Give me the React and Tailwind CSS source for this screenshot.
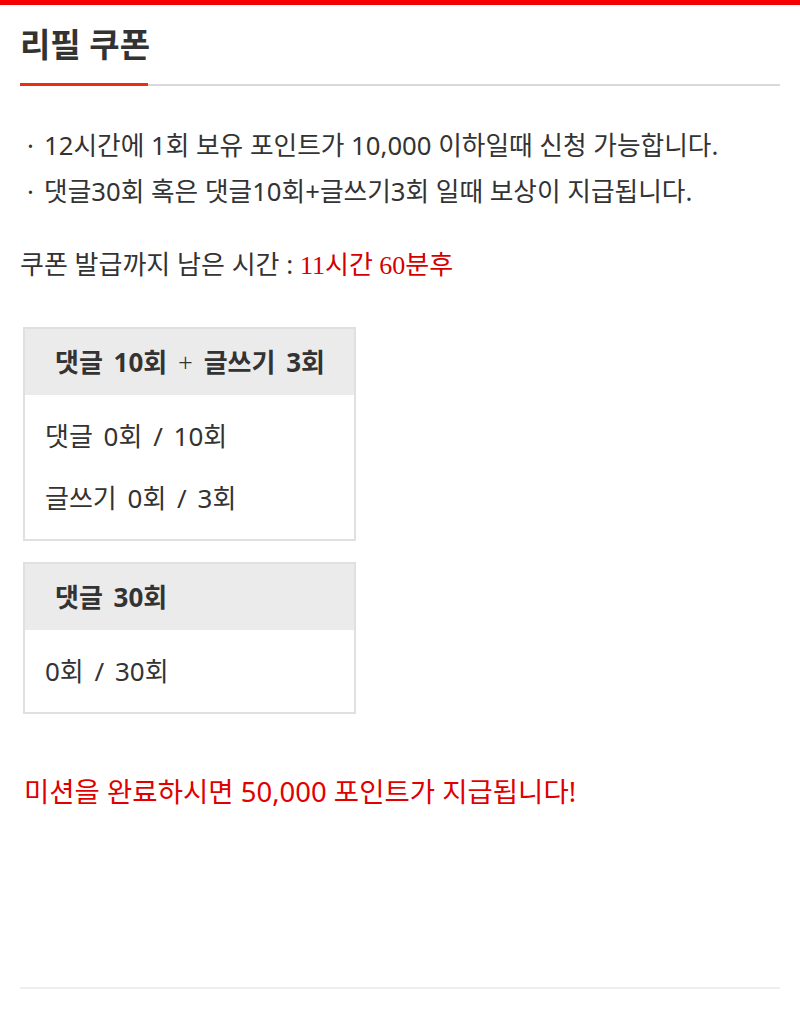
const sans = "font-['Noto_Sans','Noto_Sans_CJK_KR',sans-serif]";

const MissionBox = ({ title, rows }) => (
  <div className="ml-[3px] w-[333px] border-2 border-[#e0e0e0] bg-white">
    <div className="flex h-[66px] items-center bg-[#ebebeb] pl-[30px] text-[26px] font-bold text-[#333] [word-spacing:4px]">
      {title}
    </div>
    <div className="py-[10px] pl-[20px]">
      {rows.map((row) => (
        <p key={row} className="text-[26px] leading-[62px] text-[#333] [word-spacing:4px]">
          {row}
        </p>
      ))}
    </div>
  </div>
);

const App = () => {
  const notices = [
    "12시간에 1회 보유 포인트가 10,000 이하일때 신청 가능합니다.",
    "댓글30회 혹은 댓글10회+글쓰기3회 일때 보상이 지급됩니다.",
  ];

  return (
    <div className={`min-h-[1017px] bg-white ${sans}`}>
      <div className="h-[5px] bg-[#f50000]" />
      <div className="px-[20px]">
        <h1 className="mt-[25px] text-[33px] font-bold leading-[30px] text-[#333]">
          리필 쿠폰
        </h1>
        <div className="mt-[23px] flex items-center">
          <div className="h-[3px] w-[128px] bg-[#e8300e]" />
          <div className="h-[2px] flex-1 bg-[#d9d9d9]" />
        </div>

        <ul className="mt-[37px] text-[25.7px] leading-[46px] text-[#333]">
          {notices.map((text) => (
            <li key={text} className="flex pl-[7px]">
              <span className="w-[17px]">·</span>
              <span>{text}</span>
            </li>
          ))}
        </ul>

        <p className="mt-[27px] text-[26px] leading-[45px] text-[#333]">
          쿠폰 발급까지 남은 시간 :{" "}
          <span className="font-['Liberation_Serif','Noto_Sans_CJK_KR',serif] text-[#d40000]">
            11시간 60분후
          </span>
        </p>

        <div className="mt-[39px] flex flex-col gap-[21px]">
          <MissionBox
            title={
              <span>
                댓글 10회 <span className="font-light">+</span> 글쓰기 3회
              </span>
            }
            rows={["댓글 0회 / 10회", "글쓰기 0회 / 3회"]}
          />
          <MissionBox title="댓글 30회" rows={["0회 / 30회"]} />
        </div>

        <p className="mt-[60px] pl-[4px] text-[27.5px] leading-[36px] text-[#e00000]">
          미션을 완료하시면 50,000 포인트가 지급됩니다!
        </p>

        <div className="mt-[177px] h-[2px] bg-[#eeeeee]" />
      </div>
    </div>
  );
};

export default App;
